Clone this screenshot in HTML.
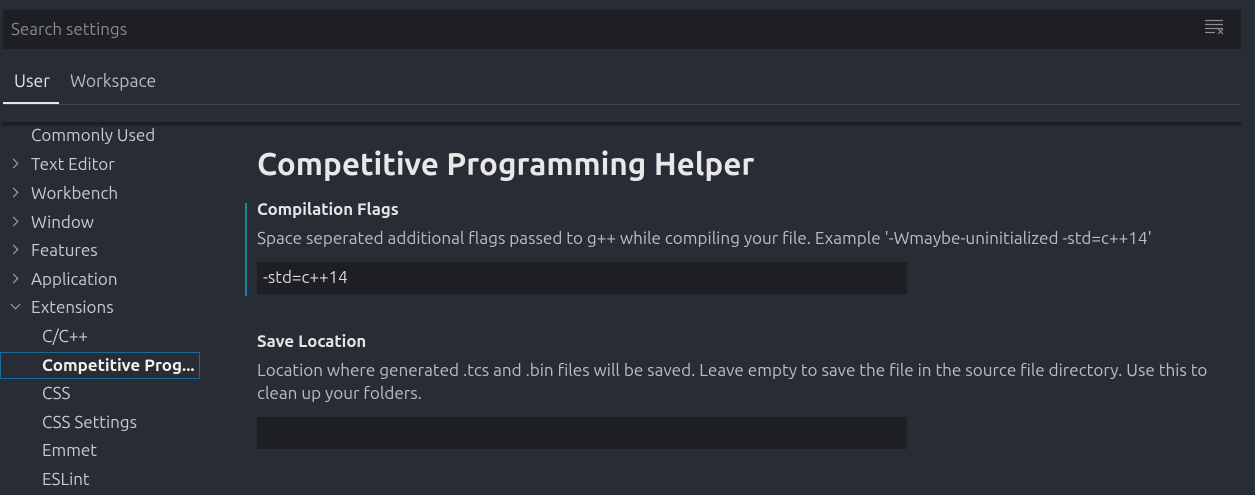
<!DOCTYPE html>
<html><head><style>
body{margin:0;width:1255px;height:495px;background:#282c34;font-family:"Ubuntu","Liberation Sans",sans-serif;color:#ccc;overflow:hidden;position:relative}
.a{position:absolute;white-space:nowrap}
.search{left:3px;top:10px;width:1238px;height:39px;background:#1e1f23}
.nav{font-size:17px;color:#c8cbd0;line-height:20px}
.chev{position:absolute;width:6px;height:6px;border-right:1.3px solid #aab;border-bottom:1.3px solid #aab}
.desc{font-size:17.1px;color:#babec4;left:257px}
.inp{left:257px;width:650px;height:32px;background:#1e1f23}
</style></head><body>
<div class="a search"></div>
<div class="a" style="left:11px;top:20px;font-size:17px;color:#868a91">Search settings</div>
<svg class="a" style="left:1204px;top:19px" width="22" height="16"><g stroke="#8a8d93" stroke-width="1.2"><line x1="1" y1="1.5" x2="19" y2="1.5"/><line x1="1" y1="5.5" x2="19" y2="5.5"/><line x1="1" y1="9.5" x2="19" y2="9.5"/><line x1="1" y1="13.5" x2="11" y2="13.5"/><line x1="14" y1="10" x2="19" y2="15"/><line x1="19" y1="10" x2="14" y2="15"/></g></svg>
<div class="a" style="left:14px;top:72px;font-size:17.5px;color:#e6e6e6">User</div>
<div class="a" style="left:70px;top:72px;font-size:17.5px;color:#b8bcc2">Workspace</div>
<div class="a" style="left:3px;top:104px;width:1238px;height:1px;background:#3f4247"></div>
<div class="a" style="left:3px;top:102px;width:56px;height:2px;background:#e6e6e6"></div>
<div class="a" style="left:3px;top:122px;width:1238px;height:3px;background:#1b1d21"></div>
<div class="a" style="left:0;top:125px;width:1241px;height:2px;background:#23262c"></div>

<div class="a nav" style="left:31px;top:126px">Commonly Used</div>
<div class="chev" style="left:10px;top:160px;transform:rotate(-45deg)"></div>
<div class="a nav" style="left:31px;top:155px">Text Editor</div>
<div class="chev" style="left:10px;top:189px;transform:rotate(-45deg)"></div>
<div class="a nav" style="left:31px;top:184px">Workbench</div>
<div class="chev" style="left:10px;top:218px;transform:rotate(-45deg)"></div>
<div class="a nav" style="left:31px;top:213px">Window</div>
<div class="chev" style="left:10px;top:246px;transform:rotate(-45deg)"></div>
<div class="a nav" style="left:31px;top:241px">Features</div>
<div class="chev" style="left:10px;top:275px;transform:rotate(-45deg)"></div>
<div class="a nav" style="left:31px;top:270px">Application</div>
<div class="chev" style="left:12px;top:301px;transform:rotate(45deg)"></div>
<div class="a nav" style="left:31px;top:298px">Extensions</div>
<div class="a nav" style="left:42px;top:327px">C/C++</div>
<div class="a" style="left:0;top:352px;width:198px;height:25px;border:1px solid #1a6a9a"></div>
<div class="a nav" style="left:42px;top:356px;font-weight:bold;color:#f0f0f0">Competitive Prog...</div>
<div class="a nav" style="left:42px;top:384px">CSS</div>
<div class="a nav" style="left:42px;top:413px">CSS Settings</div>
<div class="a nav" style="left:42px;top:441px">Emmet</div>
<div class="a nav" style="left:42px;top:470px">ESLint</div>

<div class="a" style="left:257px;top:146px;font-size:31.5px;font-weight:bold;color:#e8e8e8">Competitive Programming Helper</div>
<div class="a" style="left:245px;top:203px;width:2px;height:93px;background:#1a85a5"></div>
<div class="a" style="left:257px;top:200px;font-size:16.8px;font-weight:bold;color:#e6e6e6">Compilation Flags</div>
<div class="a desc" style="top:229px">Space seperated additional flags passed to g++ while compiling your file. Example '-Wmaybe-uninitialized -std=c++14'</div>
<div class="a inp" style="top:262px"></div>
<div class="a" style="left:263px;top:268px;font-size:17px;color:#d8d8d8">-std=c++14</div>
<div class="a" style="left:257px;top:332px;font-size:16.8px;font-weight:bold;color:#e6e6e6">Save Location</div>
<div class="a desc" style="top:361px">Location where generated .tcs and .bin files will be saved. Leave empty to save the file in the source file directory. Use this to</div>
<div class="a desc" style="top:384px">clean up your folders.</div>
<div class="a inp" style="top:417px"></div>
</body></html>
